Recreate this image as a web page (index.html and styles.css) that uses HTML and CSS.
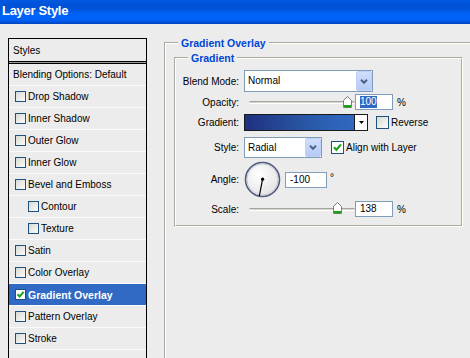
FILE: index.html
```html
<!DOCTYPE html>
<html>
<head>
<meta charset="utf-8">
<title>Layer Style</title>
<link rel="stylesheet" href="styles.css">
</head>
<body>
<div class="titlebar"><span class="title">Layer Style</span></div>
<div class="main">
  <div class="styles-panel">
    <div class="row head">Styles</div>
    <div class="row blend">Blending Options: Default</div>
    <div class="row"><span class="cb"></span>Drop Shadow</div>
    <div class="row"><span class="cb"></span>Inner Shadow</div>
    <div class="row"><span class="cb"></span>Outer Glow</div>
    <div class="row"><span class="cb"></span>Inner Glow</div>
    <div class="row"><span class="cb"></span>Bevel and Emboss</div>
    <div class="row sub"><span class="cb"></span>Contour</div>
    <div class="row sub"><span class="cb"></span>Texture</div>
    <div class="row"><span class="cb"></span>Satin</div>
    <div class="row"><span class="cb"></span>Color Overlay</div>
    <div class="row sel"><span class="cb on"><svg width="9" height="9" viewBox="0 0 9 9"><path d="M1.5 4.2 L3.6 6.4 L7.6 1.8" fill="none" stroke="#21a121" stroke-width="2"/></svg></span>Gradient Overlay</div>
    <div class="row"><span class="cb"></span>Pattern Overlay</div>
    <div class="row"><span class="cb"></span>Stroke</div>
    <div class="row last"></div>
  </div>

  <div class="settings">
    <fieldset class="group outer">
      <legend>Gradient Overlay</legend>
      <fieldset class="group inner">
        <legend>Gradient</legend>

        <div class="frow r1">
          <span class="lbl">Blend Mode:</span>
          <div class="select wide"><span class="val">Normal</span><span class="btn"><svg width="8" height="5" viewBox="0 0 8 5"><polyline points="1,0.8 4,3.8 7,0.8" fill="none" stroke="#4d6185" stroke-width="2"/></svg></span></div>
        </div>

        <div class="frow r2">
          <span class="lbl">Opacity:</span>
          <div class="slider"><div class="track"></div><svg class="thumb op" width="9" height="12" viewBox="0 0 9 12"><path d="M0.5 11.5 V4.5 L4.5 0.5 L8.5 4.5 V11.5 Z" fill="#fff" stroke="#7d7d7d"/><rect x="1" y="9" width="7" height="2.5" fill="#1ea01e"/></svg></div>
          <div class="num"><span class="hl">100</span></div>
          <span class="pct">%</span>
        </div>

        <div class="frow r3">
          <span class="lbl">Gradient:</span>
          <div class="grad"><span class="swatch"></span><span class="garrow"><svg width="5" height="3" viewBox="0 0 5 3"><polygon points="0,0 5,0 2.5,3" fill="#000"/></svg></span></div>
          <span class="cb13"></span><span class="cbl">Reverse</span>
        </div>

        <div class="frow r4">
          <span class="lbl">Style:</span>
          <div class="select narrow"><span class="val">Radial</span><span class="btn"><svg width="8" height="5" viewBox="0 0 8 5"><polyline points="1,0.8 4,3.8 7,0.8" fill="none" stroke="#4d6185" stroke-width="2"/></svg></span></div>
          <span class="cb13 on"><svg width="11" height="11" viewBox="0 0 11 11"><path d="M2 5.2 L4.4 7.8 L9 2.4" fill="none" stroke="#21a121" stroke-width="2.2"/></svg></span><span class="cbl">Align with Layer</span>
        </div>

        <div class="frow r5">
          <span class="lbl">Angle:</span>
          <svg class="dial" width="37" height="37" viewBox="0 0 37 37">
            <defs>
              <radialGradient id="dg" cx="0.4" cy="0.35" r="0.7">
                <stop offset="0" stop-color="#ffffff"/>
                <stop offset="1" stop-color="#e2e2e2"/>
              </radialGradient>
            </defs>
            <circle cx="18.5" cy="18.5" r="17" fill="url(#dg)" stroke="#4f5a7c" stroke-width="1.6"/>
            <circle cx="18.5" cy="18.5" r="15.6" fill="none" stroke="#c3c9d8" stroke-width="1"/>
            <line x1="18.6" y1="18.2" x2="15.3" y2="35" stroke="#000" stroke-width="1.2"/>
            <circle cx="18.6" cy="18.2" r="1.6" fill="#000"/>
          </svg>
          <div class="num ang">-100</div>
          <span class="deg">°</span>
        </div>

        <div class="frow r6">
          <span class="lbl">Scale:</span>
          <div class="slider"><div class="track"></div><svg class="thumb sc" width="9" height="12" viewBox="0 0 9 12"><path d="M0.5 11.5 V4.5 L4.5 0.5 L8.5 4.5 V11.5 Z" fill="#fff" stroke="#7d7d7d"/><rect x="1" y="9" width="7" height="2.5" fill="#1ea01e"/></svg></div>
          <div class="num">138</div>
          <span class="pct">%</span>
        </div>
      </fieldset>
    </fieldset>
  </div>
</div>
</body>
</html>
```
FILE: styles.css
```css
* { box-sizing: border-box; }
html, body { margin: 0; padding: 0; }
body {
  width: 470px;
  height: 358px;
  overflow: hidden;
  background: #ececec;
  font-family: "Liberation Sans", Arial, sans-serif;
  font-size: 10px;
  color: #000;
}

/* title bar */
.titlebar {
  height: 24px;
  padding: 3px 0 0 2px;
  background: linear-gradient(to bottom,
    #0059e2 0px, #0052d6 5px, #0054da 9px, #0063f8 14px,
    #0064fa 18px, #005cec 21px, #0048cc 23px, #0046c8 24px);
}
.title {
  display: block;
  color: #fff;
  font-weight: bold;
  font-size: 13px;
  letter-spacing: -0.3px;
  line-height: 16px;
}

.main {
  display: flex;
  align-items: flex-start;
  height: 334px;
  overflow: hidden;
}

/* left styles list */
.styles-panel {
  flex: none;
  margin: 14px 0 0 8px;
  width: 139px;
  height: 320px;
  border: 1px solid #000;
  border-bottom: none;
}
.row {
  height: 22px;
  border-bottom: 1px solid #fbfbfb;
  display: flex;
  align-items: center;
  padding-left: 6px;
  white-space: nowrap;
}
.row.head {
  height: 23px;
  padding-left: 4px;
  border-bottom: 1px solid #000;
}
.row.blend {
  height: 24px;
  padding-left: 4px;
  border-top: 1px solid #9c9c9c;
  box-shadow: inset 0 1px 0 #000;
}
.row.sub { padding-left: 19px; }
.row.sel {
  background: #316ac5;
  color: #fff;
  font-weight: bold;
  font-size: 10.5px;
}
.row.last { height: 9px; border-bottom: none; }

.cb {
  flex: none;
  width: 11px;
  height: 11px;
  margin-right: 2px;
  border: 1px solid #1c5180;
  background: linear-gradient(135deg, #d9d9d3, #fbfbfb);
  display: flex;
  align-items: center;
  justify-content: center;
}
.cb.on { background: #fff; }

/* right settings */
.settings {
  flex: none;
  margin: 13px 0 0 17px;
}
fieldset.group {
  margin: 0;
  padding: 0;
  min-width: 0;
  border: 2px groove #fffff4;
}
fieldset.group legend {
  margin-left: 12px;
  padding: 0 3px;
  font-weight: bold;
  font-size: 10.5px;
  line-height: 12px;
  color: #0046d5;
}
.outer {
  width: 320px;
  height: 321px;
  border-bottom: none !important;
  border-right: none !important;
}
.inner {
  width: 289px;
  margin: 3px 0 0 8px !important;
  padding: 6px 0 8px 0 !important;
}

.frow {
  display: flex;
  align-items: center;
  white-space: nowrap;
}
.lbl {
  flex: none;
  width: 63px;
  text-align: right;
  margin-right: 5px;
}
.r1 { height: 22px; }
.r2 { height: 16px; margin-top: 2px; }
.r3 { height: 17px; margin-top: 4px; }
.r4 { height: 21px; margin-top: 6px; }
.r5 { height: 37px; margin-top: 3px; }
.r6 { height: 16px; margin-top: 3px; }

/* dropdowns */
.select {
  display: flex;
  height: 100%;
  border: 1px solid #7f9db9;
  background: #fff;
}
.select.wide { width: 129px; }
.select.narrow { width: 78px; }
.select .val {
  flex: 1;
  padding-left: 3px;
  line-height: 19px;
}
.select .btn {
  width: 16px;
  display: flex;
  align-items: center;
  justify-content: center;
  background: linear-gradient(to bottom, #d0defd, #b6caf6);
  border: 1px solid #bfd0f6;
  border-radius: 2px;
}

/* sliders */
.slider {
  position: relative;
  width: 106px;
  height: 100%;
  margin-left: 5px;
  display: flex;
  align-items: center;
}
.track {
  width: 100%;
  height: 3px;
  border-top: 1px solid #a4a39c;
  border-bottom: 1px solid #fff;
  background: #d6d5ce;
  border-radius: 2px;
}
.thumb { position: absolute; }
.thumb.op { left: 94px; top: 2px; }
.thumb.sc { left: 84px; top: 1px; }

/* numeric inputs */
.num {
  flex: none;
  width: 38px;
  height: 16px;
  border: 1px solid #7f9db9;
  background: #fff;
  padding-left: 4px;
  line-height: 14px;
}
.num.ang {
  width: 42px;
  margin-left: 3px;
}
.hl {
  display: inline-block;
  line-height: 12px;
  vertical-align: top;
  margin-top: 1px;
  background: #316ac5;
  color: #fff;
}
.pct { margin-left: 4px; }
.deg { margin-left: 3px; margin-top: -4px; }

/* gradient picker */
.grad {
  display: flex;
  width: 124px;
  height: 17px;
  border: 1px solid #1a1a1a;
}
.swatch {
  flex: 1;
  background: linear-gradient(to right, #1f3080, #27519e 45%, #2d62b8 80%, #3169c0);
  border-right: 1px solid #1a1a1a;
}
.garrow {
  width: 12px;
  background: #fff;
  display: flex;
  align-items: center;
  justify-content: center;
}

/* checkbox 13px */
.cb13 {
  flex: none;
  width: 13px;
  height: 13px;
  margin-left: 8px;
  border: 1px solid #1c5180;
  background: linear-gradient(135deg, #d9d9d3, #fbfbfb);
  display: flex;
  align-items: center;
  justify-content: center;
}
.r4 .cb13 { margin-left: 9px; }
.cb13.on { background: #fff; }
.cbl { margin-left: 2px; }

.dial { flex: none; margin-right: 1px; }
```
